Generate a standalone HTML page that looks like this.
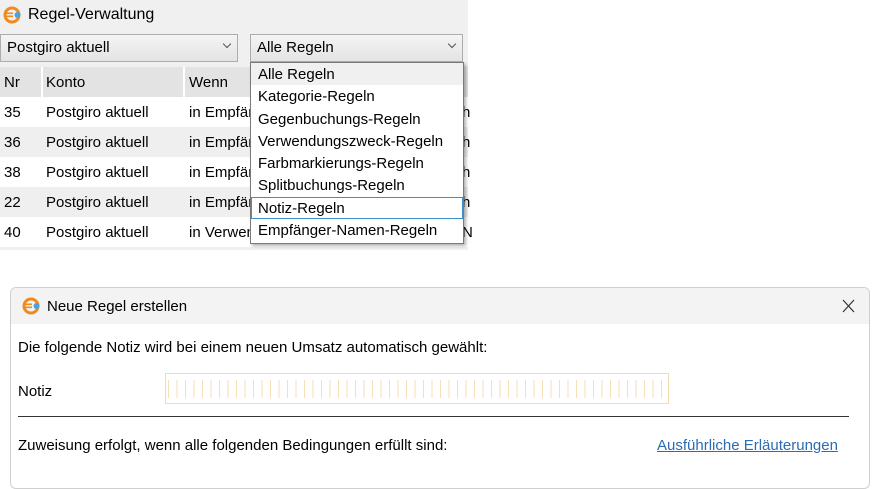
<!DOCTYPE html>
<html><head><meta charset="utf-8"><style>
body{margin:0;width:877px;height:469px;background:#fff;font-family:"Liberation Sans",sans-serif;position:relative;overflow:hidden;color:#000}
.a{position:absolute}
.icon{width:18px;height:18px}
.dd{background:linear-gradient(#f4f4f4,#e4e4e4);border:1px solid #adadad;box-sizing:border-box;font-size:15px;padding:4px 6px}
.dd .ch{position:absolute;right:7px;top:6px;width:5px;height:5px;border-right:1px solid #555;border-bottom:1px solid #555;transform:rotate(45deg)}
.row{position:absolute;left:0;width:468px;height:30px;font-size:15px}
.row span{position:absolute;top:7px}
.menu{background:#fff;border:1px solid #7a7a7a;box-shadow:2px 2px 3px rgba(0,0,0,.3);font-size:15px}
.menu div{height:22.3px;line-height:23px;padding-left:7px}
.dt{font-size:15px}
</style></head><body>
<div class="a" style="left:0;top:0;width:468px;height:250px;background:#f0f0f0"></div>
<svg class="a icon" style="left:3px;top:6px" viewBox="0 0 18 18"><circle cx="9" cy="9" r="7" fill="none" stroke="#f08a1c" stroke-width="3"/><rect x="1" y="6.5" width="9" height="1.6" fill="#f08a1c"/><rect x="1" y="9.5" width="9" height="1.6" fill="#f08a1c"/><circle cx="14.5" cy="9" r="3" fill="#4aa3df"/></svg>
<div class="a" style="left:28px;top:6px;font-size:16px">Regel-Verwaltung</div>
<div class="a dd" style="left:0;top:34px;width:238px;height:28px">Postgiro aktuell<span class="ch"></span></div>
<div class="a dd" style="left:250px;top:34px;width:213px;height:28px">Alle Regeln<span class="ch"></span></div>
<div class="row" style="top:67px;height:30px;background:#e3e3e3"><span style="left:4px">Nr</span><span style="left:46px">Konto</span><span style="left:189px">Wenn</span></div>
<div class="a" style="left:41px;top:67px;width:2px;height:30px;background:#fff"></div>
<div class="a" style="left:183px;top:67px;width:2px;height:30px;background:#fff"></div>
<div class="row" style="top:97px;background:#fff"><span style="left:4px">35</span><span style="left:46px">Postgiro aktuell</span><span style="left:189px">in Empfän</span></div>
<div class="row" style="top:127px;background:#efefef"><span style="left:4px">36</span><span style="left:46px">Postgiro aktuell</span><span style="left:189px">in Empfän</span></div>
<div class="row" style="top:157px;background:#fff"><span style="left:4px">38</span><span style="left:46px">Postgiro aktuell</span><span style="left:189px">in Empfän</span></div>
<div class="row" style="top:187px;background:#efefef"><span style="left:4px">22</span><span style="left:46px">Postgiro aktuell</span><span style="left:189px">in Empfän</span></div>
<div class="row" style="top:217px;background:#fff"><span style="left:4px">40</span><span style="left:46px">Postgiro aktuell</span><span style="left:189px">in Verwen</span></div>
<div class="a" style="left:462px;top:104px;font-size:15px">h</div>
<div class="a" style="left:462px;top:134px;font-size:15px">h</div>
<div class="a" style="left:462px;top:164px;font-size:15px">h</div>
<div class="a" style="left:462px;top:194px;font-size:15px">h</div>
<div class="a" style="left:462px;top:224px;font-size:15px">N</div>
<div class="a menu" style="left:250px;top:62px;width:212px;height:180px">
<div style="background:#f0f0f0">Alle Regeln</div><div>Kategorie-Regeln</div><div>Gegenbuchungs-Regeln</div><div>Verwendungszweck-Regeln</div><div>Farbmarkierungs-Regeln</div><div>Splitbuchungs-Regeln</div><div style="outline:1px solid #3c8fc8;outline-offset:-1px">Notiz-Regeln</div><div>Empfänger-Namen-Regeln</div></div>

<div class="a" style="left:10px;top:287px;width:858px;height:200px;border:1px solid #cfcfcf;border-radius:6px;background:#fff"></div>
<div class="a" style="left:11px;top:288px;width:858px;height:36px;background:#f3f3f3;border-radius:6px 6px 0 0"></div>
<svg class="a icon" style="left:22px;top:297px" viewBox="0 0 18 18"><circle cx="9" cy="9" r="7" fill="none" stroke="#f08a1c" stroke-width="3"/><rect x="1" y="6.5" width="9" height="1.6" fill="#f08a1c"/><rect x="1" y="9.5" width="9" height="1.6" fill="#f08a1c"/><circle cx="14.5" cy="9" r="3" fill="#4aa3df"/></svg>
<div class="a dt" style="left:47px;top:298px">Neue Regel erstellen</div>
<svg class="a" style="left:842px;top:299px" width="13" height="14" viewBox="0 0 13 14"><path d="M1 1L12 13M12 1L1 13" stroke="#333" stroke-width="1.2"/></svg>
<div class="a dt" style="left:18px;top:339px">Die folgende Notiz wird bei einem neuen Umsatz automatisch gewählt:</div>
<div class="a dt" style="left:18px;top:383px">Notiz</div>
<div class="a" style="left:165px;top:373px;width:502px;height:29px;border:1px solid #f5dcae;background:repeating-linear-gradient(90deg,transparent 0 7.5px,#f7dfb6 7.5px 8.5px);background-size:8.5px 18px;background-position:3px 6px;background-repeat:repeat-x"></div>
<div class="a" style="left:18px;top:416px;width:831px;height:1px;background:#333"></div>
<div class="a dt" style="left:18px;top:437px">Zuweisung erfolgt, wenn alle folgenden Bedingungen erfüllt sind:</div>
<div class="a dt" style="left:657px;top:437px;color:#2a6cb5;text-decoration:underline">Ausführliche Erläuterungen</div>
</body></html>
